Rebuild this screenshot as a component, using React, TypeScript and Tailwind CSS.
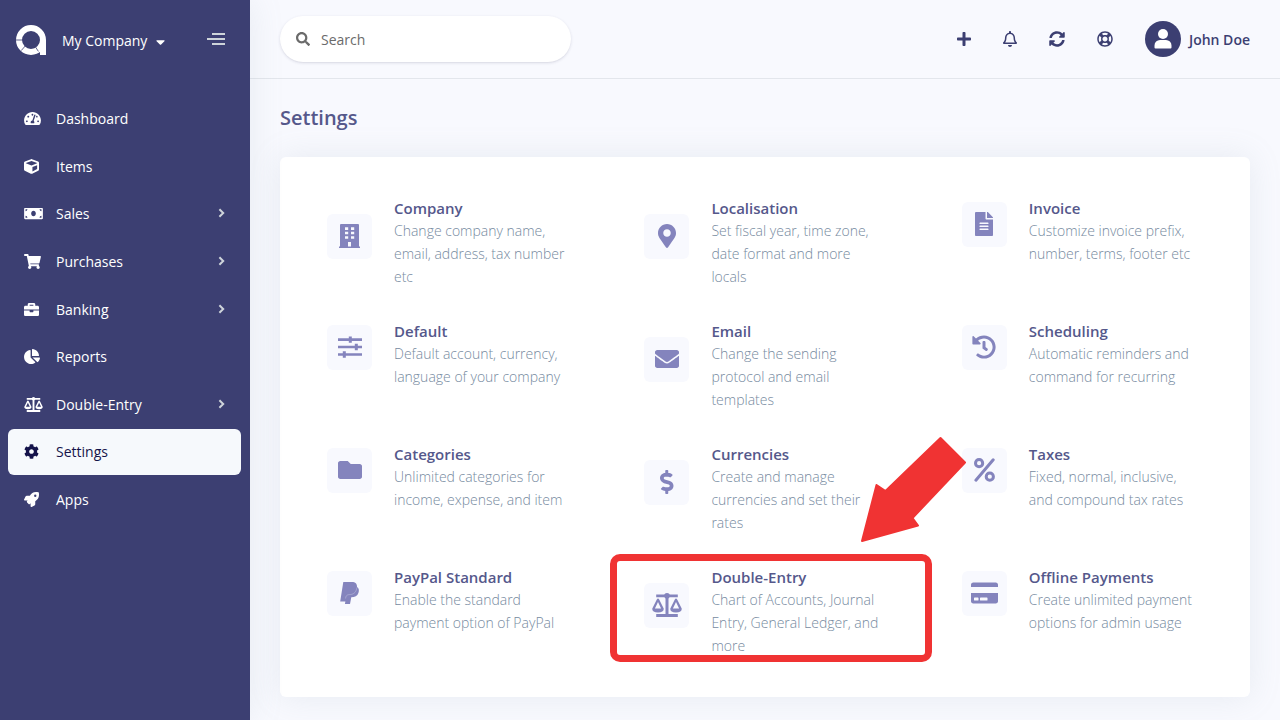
import React from 'react';
import {
  FaTachometerAlt, FaCube, FaMoneyBill, FaShoppingCart, FaBriefcase, FaChartPie,
  FaCog, FaRocket, FaSearch, FaPlus, FaRegBell, FaSyncAlt, FaRegLifeRing,
  FaMapMarkerAlt, FaFileAlt, FaEnvelope, FaHistory, FaFolder, FaDollarSign,
  FaCreditCard, FaCaretDown,
} from 'react-icons/fa';

type Glyph = React.ComponentType<{ className?: string }>;
type NavEntry = { label: string; icon: Glyph; size: string; children?: boolean; active?: boolean };
type Setting = { title: string; text: string; icon: Glyph; size: string };

function PercentGlyph({ className }: { className?: string }) {
  return (
    <svg viewBox="0 0 21 24" fill="none" stroke="currentColor" strokeWidth="3" className={className}>
      <circle cx="5.1" cy="5.2" r="3.6" />
      <circle cx="15.8" cy="18.7" r="3.6" />
      <path d="M1.9 22.2L19.2 1.8" strokeLinecap="round" />
    </svg>
  );
}

function PayPalGlyph({ className }: { className?: string }) {
  return (
    <svg viewBox="0 0 21 24" className={className}>
      <path
        d="M4.3 1H12.8C16.5 1 18.2 3 18 5.9C20 7.1 20.3 9.5 19.4 12C18.4 15 15.8 16.2 12.3 16.3L11 23H5.9L6.4 20.6H1.2Z"
        fill="currentColor"
      />
      <path d="M6.6 17.5C6.9 14 8.5 13.7 11.5 13.5C15.5 13.2 17.3 10.5 17.9 6.5" fill="none" stroke="#f8f9fe" strokeWidth="0.6" opacity="0.45" />
    </svg>
  );
}

function ScaleGlyph({ className }: { className?: string }) {
  return (
    <svg viewBox="0 0 30 24" fill="currentColor" className={className}>
      <path d="M4.2 1.6h21.6v2.7H4.2zM13.5 3h3v18h-3zM4.2 20.9h21.6V24H4.2z" />
      <circle cx="15" cy="2.8" r="2.8" />
      <path
        fillRule="evenodd"
        d="M4.8 6.5Q6 4.7 7.2 6.500L11.700 15.500Q12.200 19.400 6 19.400Q-.200 19.400 .300 15.500ZM6 9L2.900 15.400H9.100Z"
      />
      <path
        fillRule="evenodd"
        d="M22.8 6.500Q24 4.700 25.200 6.500L29.700 15.500Q30.200 19.400 24 19.400Q17.800 19.400 18.300 15.500ZM24 9L20.900 15.400H27.100Z"
      />
    </svg>
  );
}

function SlidersGlyph({ className }: { className?: string }) {
  return (
    <svg viewBox="0 0 24 24" fill="none" stroke="currentColor" className={className}>
      <path d="M0 4.600H24M0 12H24M0 19.500H24" strokeWidth="2.700" />
      <path d="M12.300 1.400V7.800M18.300 8.800V15.200M6.300 16.300V22.700" strokeWidth="3" />
    </svg>
  );
}

function BuildingGlyph({ className }: { className?: string }) {
  return (
    <svg viewBox="0 0 21 24" fill="currentColor" className={className}>
      <path
        fillRule="evenodd"
        d="M2 0H19Q20 0 20 1V22.500H21V24H0V22.500H1V1Q1 0 2 0ZM6 3.300V5.900H9.200V3.300ZM12 3.300V5.900H15.200V3.300ZM6 7.700V10.300H9.200V7.700ZM12 7.700V10.300H15.200V7.700ZM6 12.200V14.800H9.200V12.200ZM12 12.200V14.800H15.200V12.200ZM9 18V22.500H12V18Z"
      />
    </svg>
  );
}

const nav: NavEntry[] = [
  { label: 'Dashboard', icon: FaTachometerAlt, size: 'h-[15px] w-[17px]' },
  { label: 'Items', icon: FaCube, size: 'h-[15px] w-[15px]' },
  { label: 'Sales', icon: FaMoneyBill, size: 'h-[15px] w-[19px]', children: true },
  { label: 'Purchases', icon: FaShoppingCart, size: 'h-[15px] w-[17px]', children: true },
  { label: 'Banking', icon: FaBriefcase, size: 'h-[15px] w-[15px]', children: true },
  { label: 'Reports', icon: FaChartPie, size: 'h-[15px] w-4' },
  { label: 'Double-Entry', icon: ScaleGlyph, size: 'h-[15px] w-[19px]', children: true },
  { label: 'Settings', icon: FaCog, size: 'h-[15px] w-[15px]', active: true },
  { label: 'Apps', icon: FaRocket, size: 'h-[15px] w-[15px]' },
];

const settings: Setting[] = [
  { title: 'Company', text: 'Change company name,\nemail, address, tax number\netc', icon: BuildingGlyph, size: 'h-6 w-[21px]' },
  { title: 'Localisation', text: 'Set fiscal year, time zone,\ndate format and more\nlocals', icon: FaMapMarkerAlt, size: 'h-6 w-[18px]' },
  { title: 'Invoice', text: 'Customize invoice prefix,\nnumber, terms, footer etc', icon: FaFileAlt, size: 'h-6 w-[18px]' },
  { title: 'Default', text: 'Default account, currency,\nlanguage of your company', icon: SlidersGlyph, size: 'h-6 w-6' },
  { title: 'Email', text: 'Change the sending\nprotocol and email\ntemplates', icon: FaEnvelope, size: 'h-6 w-6' },
  { title: 'Scheduling', text: 'Automatic reminders and\ncommand for recurring', icon: FaHistory, size: 'h-6 w-6' },
  { title: 'Categories', text: 'Unlimited categories for\nincome, expense, and item', icon: FaFolder, size: 'h-6 w-6' },
  { title: 'Currencies', text: 'Create and manage\ncurrencies and set their\nrates', icon: FaDollarSign, size: 'h-6 w-[13.5px]' },
  { title: 'Taxes', text: 'Fixed, normal, inclusive,\nand compound tax rates', icon: PercentGlyph, size: 'h-6 w-[21px]' },
  { title: 'PayPal Standard', text: 'Enable the standard\npayment option of PayPal', icon: PayPalGlyph, size: 'h-6 w-[21px]' },
  { title: 'Double-Entry', text: 'Chart of Accounts, Journal\nEntry, General Ledger, and\nmore', icon: ScaleGlyph, size: 'h-6 w-[30px]' },
  { title: 'Offline Payments', text: 'Create unlimited payment\noptions for admin usage', icon: FaCreditCard, size: 'h-6 w-[27px]' },
];

function Logo() {
  return (
    <svg viewBox="0 0 30 30" className="h-[30px] w-[30px]">
      <circle cx="15" cy="15" r="12" fill="none" stroke="#fff" strokeWidth="6" />
      <path d="M24 15h6v15h-6z" fill="#fff" />
      <path d="M0 15h6.2M5.2 25.6l4.2-4.8M22.4 26.4l-3-4.6" stroke="#3c3f72" strokeWidth="0.8" />
    </svg>
  );
}

function Sidebar() {
  return (
    <aside className="z-10 flex w-[250px] shrink-0 flex-col bg-[#3c3f72] text-white shadow-[0_0_32px_rgba(136,152,170,0.15)]">
      <div className="flex h-24 items-start pt-[25px] pl-4">
        <Logo />
        <span className="ml-4 pt-[6px] text-sm leading-5">My Company</span>
        <FaCaretDown className="mt-[10px] ml-[9px] h-[14px] w-[9px]" />
        <svg viewBox="0 0 18 12" className="mt-[8px] ml-[42px] h-3 w-[18px]">
          <path d="M5 1h13M0 6h18M5 11h13" stroke="#ced4da" strokeWidth="2" />
        </svg>
      </div>
      <nav className="flex flex-col gap-[1.65px] pr-[9px] pl-2">
        {nav.map(({ label, icon: Icon, size, children, active }) => (
          <a
            key={label}
            className={
              active
                ? 'flex h-[46px] items-center rounded-md bg-[#f6f9fc] pr-4 pl-4 text-[#14134a]'
                : 'flex h-[46px] items-center pr-4 pl-4'
            }
          >
            <span className="flex w-8 shrink-0 pb-px"><Icon className={size} /></span>
            <span className="grow text-sm leading-5">{label}</span>
            {children && (
              <svg viewBox="0 0 7 10" className="mb-[2px] h-[10px] w-[7px]">
                <path d="M1.400 1.300L5.200 5L1.400 8.700" fill="none" stroke="#ced4da" strokeWidth="2" />
              </svg>
            )}
          </a>
        ))}
      </nav>
    </aside>
  );
}

function Header() {
  return (
    <header className="flex h-[79px] items-start border-b border-[#e3e6ec] pr-[30px] pl-[30px] text-[#3c3f72]">
      <div className="mt-4 flex h-[46px] w-[291px] items-center rounded-full bg-white pl-4 text-[#6b6b6b] shadow-[0_1px_3px_rgba(50,50,93,0.15),0_1px_0_rgba(0,0,0,0.02)]">
        <FaSearch className="h-[14px] w-[14px]" />
        <span className="ml-[11px] pt-[2px] text-sm leading-5">Search</span>
      </div>
      <div className="ml-auto flex h-[78px] items-center">
        <FaPlus className="h-4 w-[14px]" />
        <FaRegBell className="ml-8 h-4 w-[14px]" />
        <FaSyncAlt className="ml-8 h-4 w-4" />
        <FaRegLifeRing className="ml-8 h-4 w-4" />
        <svg viewBox="0 0 36 36" className="ml-8 h-9 w-9">
          <circle cx="18" cy="18" r="18" fill="#3c3f72" />
          <circle cx="18" cy="13" r="5" fill="#fff" />
          <path d="M9.500 26.500V24.500a5.500 5.500 0 0 1 5.500-5.500h6a5.500 5.500 0 0 1 5.500 5.500v2a1 1 0 0 1-1 1h-15a1 1 0 0 1-1-1z" fill="#fff" />
        </svg>
        <span className="ml-2 pt-[2px] text-sm leading-5 font-semibold">John Doe</span>
      </div>
    </header>
  );
}

function SettingItem({ title, text, icon: Icon, size }: Setting) {
  return (
    <div className="flex h-[123px] items-start">
      <div className="flex items-center">
        <div className="mb-[12.5px] flex h-[45px] w-[45px] items-start justify-center rounded-md bg-[#f8f9fe] pt-[10px] text-[#8484bd]">
          <Icon className={size} />
        </div>
        <div className="ml-[22px]">
          <h4 className="text-[15px] leading-[22px] font-semibold text-[#55588b]">{title}</h4>
          <p className="text-sm leading-[23px] font-light whitespace-pre text-[#768aa0]">{text}</p>
        </div>
      </div>
    </div>
  );
}

export default function App() {
  return (
    <div className="relative flex h-[720px] w-[1280px] overflow-hidden bg-[#f8f9fe] font-['Open_Sans',sans-serif]">
      <Sidebar />
      <main className="flex grow flex-col">
        <Header />
        <h1 className="mt-[24px] ml-[30px] text-[20px] leading-[30px] font-semibold text-[#55588b]">Settings</h1>
        <section className="mt-[24px] ml-[30px] grid h-[540px] w-[970px] grid-cols-[317.4px_317.4px_280px] content-start rounded-md bg-white pt-[40px] pl-[47px] shadow-[0_0_32px_rgba(136,152,170,0.15)]">
          {settings.map((s) => (
            <SettingItem key={s.title} {...s} />
          ))}
        </section>
      </main>
      <div className="absolute top-[554px] left-[610px] z-20 h-[108px] w-[322px] rounded-[10px] border-[7px] border-[#f03333]" />
      <svg viewBox="0 0 108 108" className="absolute top-[436px] left-[860px] z-20 h-[108px] w-[108px]">
        <path
          d="M2 105L16.500 49L25.500 55L80.500 2L105 26.500L52.500 82L58 89.500Z"
          fill="#f03333" stroke="#f03333" strokeWidth="2" strokeLinejoin="round"
        />
      </svg>
    </div>
  );
}
